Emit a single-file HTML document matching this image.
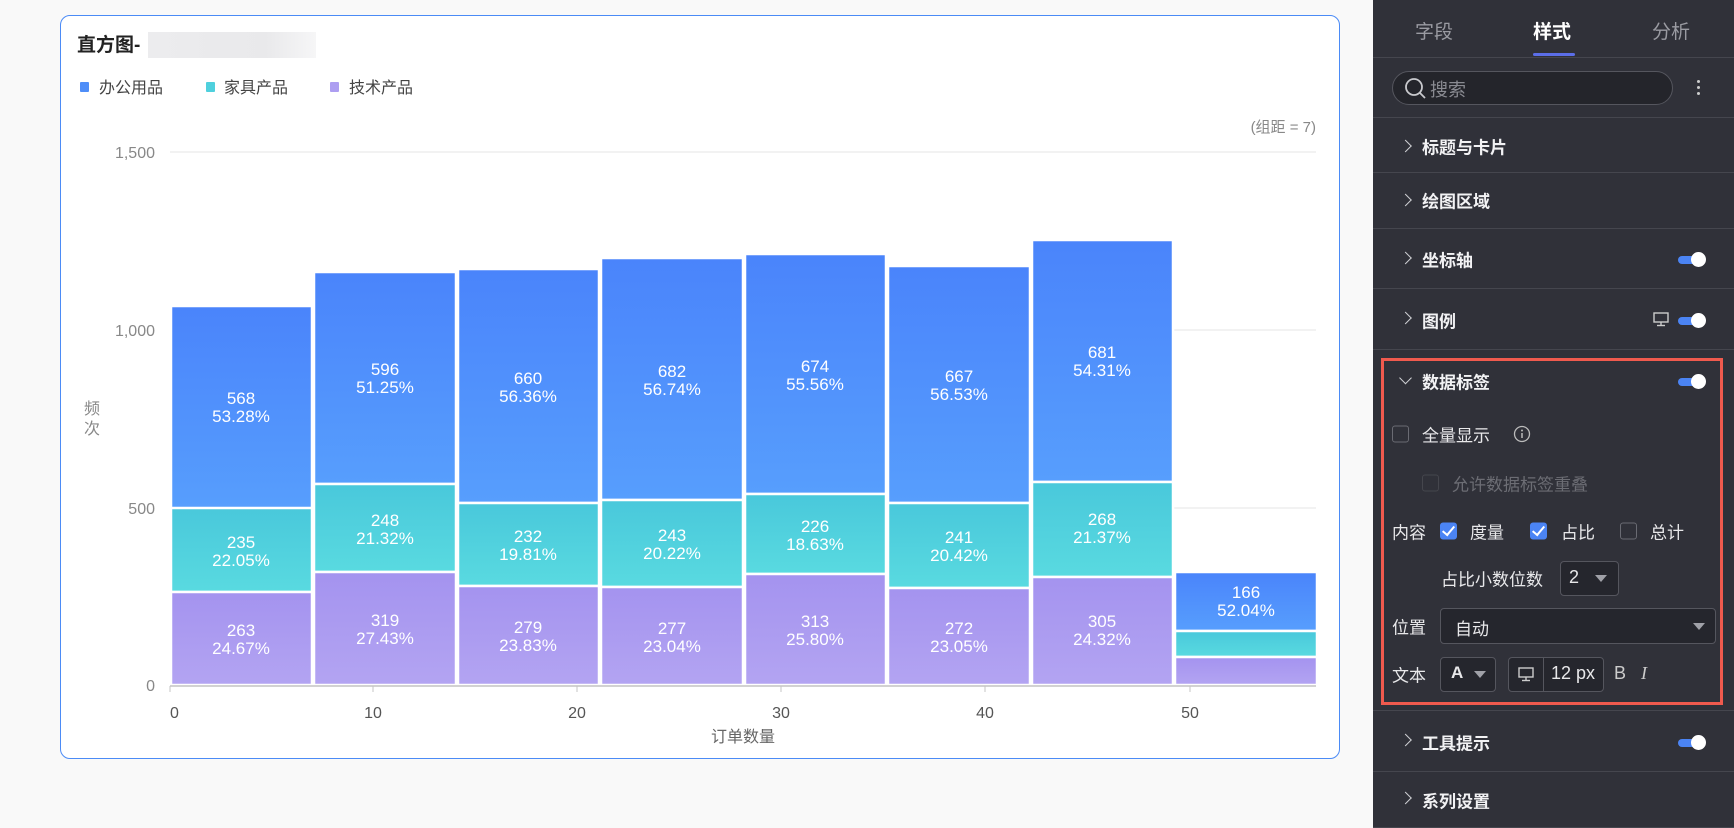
<!DOCTYPE html>
<html><head><meta charset="utf-8"><style>
body{margin:0;width:1734px;height:828px;background:#f9f9f9;font-family:"Liberation Sans","Noto Sans CJK SC",sans-serif;position:relative;overflow:hidden}
.card{position:absolute;left:60px;top:15px;width:1278px;height:742px;border:1.5px solid #4b8bf6;border-radius:10px;background:#fff}
.panel{position:absolute;left:1373px;top:0;width:361px;height:828px;background:#303139;color:#e8e8ea}
.t{position:absolute;white-space:nowrap}
.hd{position:absolute;left:0;width:361px;height:1px;background:#45464e}
.it{position:absolute;left:49px;font-size:17px;font-weight:bold;color:#f2f2f4;transform:translateY(-50%)}
.chev{position:absolute;left:29px;width:8px;height:8px;border-right:1.5px solid #cfd0d4;border-top:1.5px solid #cfd0d4;transform:translateY(-50%) rotate(45deg)}
.tg{position:absolute;left:305px;width:26px;height:8px;border-radius:4px;background:#4b84f4;transform:translateY(-50%)}
.tg::after{content:"";position:absolute;right:-2px;top:-4px;width:15px;height:15px;border-radius:50%;background:#fff}
.cb{position:absolute;width:17px;height:17px;border:1px solid #6a6b73;border-radius:3px;transform:translateY(-50%);box-sizing:border-box}
.cbon{background:#4b84f4;border-color:#4b84f4}
.cbon::after{content:"";position:absolute;left:4px;top:0px;width:5px;height:10px;border-right:2.5px solid #fff;border-bottom:2.5px solid #fff;transform:rotate(40deg)}
.lb{position:absolute;font-size:17px;color:#e8e8ea;transform:translateY(-50%)}
.sel{position:absolute;background:#25262d;border:1px solid #55565e;border-radius:4px;box-sizing:border-box}
.tri{position:absolute;width:0;height:0;border-left:6px solid transparent;border-right:6px solid transparent;border-top:7px solid #a0a1a8}
</style></head><body>
<div class="card"></div>
<svg width="1734" height="828" style="position:absolute;left:0;top:0" font-family="Liberation Sans, Noto Sans CJK SC, sans-serif">
<defs>
<linearGradient id="gb" x1="0" y1="0" x2="0" y2="1"><stop offset="0" stop-color="#4a84fb"/><stop offset="1" stop-color="#579efd"/></linearGradient>
<linearGradient id="gc" x1="0" y1="0" x2="0" y2="1"><stop offset="0" stop-color="#49c8db"/><stop offset="1" stop-color="#59dae0"/></linearGradient>
<linearGradient id="gp" x1="0" y1="0" x2="0" y2="1"><stop offset="0" stop-color="#a493ef"/><stop offset="1" stop-color="#b3a4f2"/></linearGradient>
<linearGradient id="gr" x1="0" y1="0" x2="1" y2="0"><stop offset="0" stop-color="#ececee"/><stop offset="0.7" stop-color="#e9e9eb"/><stop offset="1" stop-color="#f6f6f7"/></linearGradient>
</defs>
<text x="77" y="51" font-size="19" font-weight="bold" fill="#222">直方图-</text>
<rect x="148" y="32" width="168" height="26" fill="url(#gr)"/>
<rect x="80" y="82" width="9" height="10" rx="1" fill="#4f8ef8"/><text x="99" y="93" font-size="16" fill="#444">办公用品</text>
<rect x="206" y="82" width="9" height="10" rx="1" fill="#4fd0dd"/><text x="224" y="93" font-size="16" fill="#444">家具产品</text>
<rect x="330" y="82" width="9" height="10" rx="1" fill="#ad9ef1"/><text x="349" y="93" font-size="16" fill="#444">技术产品</text>
<text x="1316" y="132" font-size="15" fill="#888" text-anchor="end">(组距 = 7)</text>
<g stroke="#eeeeee" stroke-width="1.5"><line x1="170" y1="152" x2="1316" y2="152"/><line x1="170" y1="330" x2="1316" y2="330"/><line x1="170" y1="508" x2="1316" y2="508"/></g>
<g font-size="16" fill="#888" text-anchor="end"><text x="155" y="158">1,500</text><text x="155" y="336">1,000</text><text x="155" y="514">500</text><text x="155" y="691">0</text></g>
<text x="92" y="414" font-size="16" fill="#888" text-anchor="middle">频</text><text x="92" y="434" font-size="16" fill="#888" text-anchor="middle">次</text>
<g stroke="#fff" stroke-width="2.5">
<rect x="171" y="306" width="141" height="203" fill="url(#gb)"/><rect x="171" y="508" width="141" height="84" fill="url(#gc)"/><rect x="171" y="592" width="141" height="93" fill="url(#gp)"/>
<rect x="314" y="272" width="142" height="212" fill="url(#gb)"/><rect x="314" y="484" width="142" height="88" fill="url(#gc)"/><rect x="314" y="572" width="142" height="113" fill="url(#gp)"/>
<rect x="458" y="269" width="141" height="234" fill="url(#gb)"/><rect x="458" y="503" width="141" height="83" fill="url(#gc)"/><rect x="458" y="586" width="141" height="99" fill="url(#gp)"/>
<rect x="601" y="258" width="142" height="242" fill="url(#gb)"/><rect x="601" y="500" width="142" height="87" fill="url(#gc)"/><rect x="601" y="587" width="142" height="98" fill="url(#gp)"/>
<rect x="745" y="254" width="141" height="240" fill="url(#gb)"/><rect x="745" y="494" width="141" height="80" fill="url(#gc)"/><rect x="745" y="574" width="141" height="111" fill="url(#gp)"/>
<rect x="888" y="266" width="142" height="237" fill="url(#gb)"/><rect x="888" y="503" width="142" height="85" fill="url(#gc)"/><rect x="888" y="588" width="142" height="97" fill="url(#gp)"/>
<rect x="1032" y="240" width="141" height="242" fill="url(#gb)"/><rect x="1032" y="482" width="141" height="95" fill="url(#gc)"/><rect x="1032" y="577" width="141" height="108" fill="url(#gp)"/>
<rect x="1175" y="572" width="142" height="59" fill="url(#gb)"/><rect x="1175" y="631" width="142" height="26" fill="url(#gc)"/><rect x="1175" y="657" width="142" height="28" fill="url(#gp)"/>
</g>
<line x1="170" y1="686" x2="1316" y2="686" stroke="#c4c4c4" stroke-width="1.5"/>
<g stroke="#c4c4c4"><line x1="170" y1="686" x2="170" y2="692"/><line x1="373" y1="686" x2="373" y2="692"/><line x1="577" y1="686" x2="577" y2="692"/><line x1="781" y1="686" x2="781" y2="692"/><line x1="985" y1="686" x2="985" y2="692"/><line x1="1190" y1="686" x2="1190" y2="692"/></g>
<g font-size="16" fill="#555"><text x="170" y="718">0</text><text x="373" y="718" text-anchor="middle">10</text><text x="577" y="718" text-anchor="middle">20</text><text x="781" y="718" text-anchor="middle">30</text><text x="985" y="718" text-anchor="middle">40</text><text x="1190" y="718" text-anchor="middle">50</text></g>
<text x="743" y="742" font-size="16" fill="#666" text-anchor="middle">订单数量</text>
<g font-size="17" fill="#fff" text-anchor="middle">
<text x="241" y="404">568</text><text x="241" y="422">53.28%</text>
<text x="241" y="548">235</text><text x="241" y="566">22.05%</text>
<text x="241" y="636">263</text><text x="241" y="654">24.67%</text>
<text x="385" y="375">596</text><text x="385" y="393">51.25%</text>
<text x="385" y="526">248</text><text x="385" y="544">21.32%</text>
<text x="385" y="626">319</text><text x="385" y="644">27.43%</text>
<text x="528" y="384">660</text><text x="528" y="402">56.36%</text>
<text x="528" y="542">232</text><text x="528" y="560">19.81%</text>
<text x="528" y="633">279</text><text x="528" y="651">23.83%</text>
<text x="672" y="377">682</text><text x="672" y="395">56.74%</text>
<text x="672" y="541">243</text><text x="672" y="559">20.22%</text>
<text x="672" y="634">277</text><text x="672" y="652">23.04%</text>
<text x="815" y="372">674</text><text x="815" y="390">55.56%</text>
<text x="815" y="532">226</text><text x="815" y="550">18.63%</text>
<text x="815" y="627">313</text><text x="815" y="645">25.80%</text>
<text x="959" y="382">667</text><text x="959" y="400">56.53%</text>
<text x="959" y="543">241</text><text x="959" y="561">20.42%</text>
<text x="959" y="634">272</text><text x="959" y="652">23.05%</text>
<text x="1102" y="358">681</text><text x="1102" y="376">54.31%</text>
<text x="1102" y="525">268</text><text x="1102" y="543">21.37%</text>
<text x="1102" y="627">305</text><text x="1102" y="645">24.32%</text>
<text x="1246" y="598">166</text><text x="1246" y="616">52.04%</text>
</g>
</svg>
<div class="panel">
<div class="t" style="left:42px;top:17px;font-size:19px;color:#9a9ba2">字段</div>
<div class="t" style="left:160px;top:17px;font-size:19px;color:#fff;font-weight:bold">样式</div>
<div class="t" style="left:279px;top:17px;font-size:19px;color:#9a9ba2">分析</div>
<div style="position:absolute;left:160px;top:53px;width:42px;height:3px;border-radius:2px;background:#5b6ee8"></div>
<div class="hd" style="top:57px"></div>
<div style="position:absolute;left:19px;top:71px;width:281px;height:34px;box-sizing:border-box;border:1px solid #55565e;border-radius:17px;background:#24252b"></div>
<svg style="position:absolute;left:31px;top:77px" width="24" height="24"><circle cx="10" cy="10" r="8" fill="none" stroke="#c8c9cd" stroke-width="1.8"/><line x1="16" y1="16" x2="21" y2="21" stroke="#c8c9cd" stroke-width="1.8"/></svg>
<div class="t" style="left:57px;top:76px;font-size:18px;color:#8a8b92">搜索</div>
<div style="position:absolute;left:324px;top:80px;width:3px;height:3px;border-radius:2px;background:#ccc;box-shadow:0 6px 0 #ccc,0 12px 0 #ccc"></div>
<div class="hd" style="top:117px"></div>
<div class="chev" style="top:146px;left:28px"></div><div class="it" style="top:146px">标题与卡片</div>
<div class="hd" style="top:172px"></div>
<div class="chev" style="top:200px;left:28px"></div><div class="it" style="top:200px">绘图区域</div>
<div class="hd" style="top:228px"></div>
<div class="chev" style="top:258px;left:28px"></div><div class="it" style="top:259px">坐标轴</div><div class="tg" style="top:260px"></div>
<div class="hd" style="top:288px"></div>
<div class="chev" style="top:318px;left:28px"></div><div class="it" style="top:320px">图例</div><div class="tg" style="top:321px"></div>
<svg style="position:absolute;left:280px;top:312px" width="16" height="15"><rect x="1" y="1" width="14" height="9" fill="none" stroke="#ccc" stroke-width="1.4"/><line x1="8" y1="10" x2="8" y2="13" stroke="#ccc" stroke-width="1.4"/><line x1="4" y1="13.5" x2="12" y2="13.5" stroke="#ccc" stroke-width="1.4"/></svg>
<div class="hd" style="top:349px"></div>
<div style="position:absolute;left:8px;top:358px;width:342px;height:347px;box-sizing:border-box;border:3px solid #f05a4e"></div>
<div class="chev" style="top:378px;left:28px;transform:translateY(-50%) rotate(135deg)"></div><div class="it" style="top:381px">数据标签</div><div class="tg" style="top:382px"></div>
<div class="cb" style="left:19px;top:434px"></div><div class="lb" style="left:49px;top:434px">全量显示</div>
<svg style="position:absolute;left:140px;top:425px" width="18" height="18"><circle cx="9" cy="9" r="7.5" fill="none" stroke="#bbb" stroke-width="1.3"/><line x1="9" y1="8" x2="9" y2="13" stroke="#bbb" stroke-width="1.5"/><circle cx="9" cy="5.5" r="1" fill="#bbb"/></svg>
<div class="cb" style="left:49px;top:483px;border-color:#45464d"></div><div class="lb" style="left:79px;top:483px;color:#6c6d74">允许数据标签重叠</div>
<div class="lb" style="left:19px;top:531px">内容</div>
<div class="cb cbon" style="left:67px;top:531px"></div><div class="lb" style="left:97px;top:531px">度量</div>
<div class="cb cbon" style="left:157px;top:531px"></div><div class="lb" style="left:188px;top:531px">占比</div>
<div class="cb" style="left:247px;top:531px"></div><div class="lb" style="left:277px;top:531px">总计</div>
<div class="lb" style="left:68px;top:578px">占比小数位数</div>
<div class="sel" style="left:187px;top:561px;width:59px;height:35px"></div><div class="t" style="left:196px;top:567px;font-size:18px">2</div><div class="tri" style="left:222px;top:575px"></div>
<div class="lb" style="left:19px;top:626px">位置</div>
<div class="sel" style="left:67px;top:608px;width:276px;height:36px"></div><div class="t" style="left:82px;top:615px;font-size:17px">自动</div><div class="tri" style="left:320px;top:623px"></div>
<div class="lb" style="left:19px;top:674px">文本</div>
<div class="sel" style="left:67px;top:657px;width:56px;height:35px"></div><div class="t" style="left:78px;top:663px;font-size:17px;font-weight:bold">A</div><div class="tri" style="left:101px;top:671px"></div>
<div class="sel" style="left:135px;top:657px;width:96px;height:35px"></div><div style="position:absolute;left:170px;top:658px;width:1px;height:33px;background:#55565e"></div>
<svg style="position:absolute;left:145px;top:667px" width="16" height="15"><rect x="1" y="1" width="14" height="9" fill="none" stroke="#ccc" stroke-width="1.4"/><line x1="8" y1="10" x2="8" y2="13" stroke="#ccc" stroke-width="1.4"/><line x1="4" y1="13.5" x2="12" y2="13.5" stroke="#ccc" stroke-width="1.4"/></svg>
<div class="t" style="left:178px;top:663px;font-size:18px">12 px</div>
<div class="t" style="left:241px;top:663px;font-size:18px;color:#ccc">B</div>
<div class="t" style="left:268px;top:663px;font-size:18px;color:#ccc;font-style:italic;font-family:'Liberation Serif',serif">I</div>
<div class="hd" style="top:710px"></div>
<div class="chev" style="top:740px;left:28px"></div><div class="it" style="top:742px">工具提示</div><div class="tg" style="top:743px"></div>
<div class="hd" style="top:771px"></div>
<div class="chev" style="top:798px;left:28px"></div><div class="it" style="top:800px">系列设置</div>
<div class="hd" style="top:827px"></div>
</div>
</body></html>
